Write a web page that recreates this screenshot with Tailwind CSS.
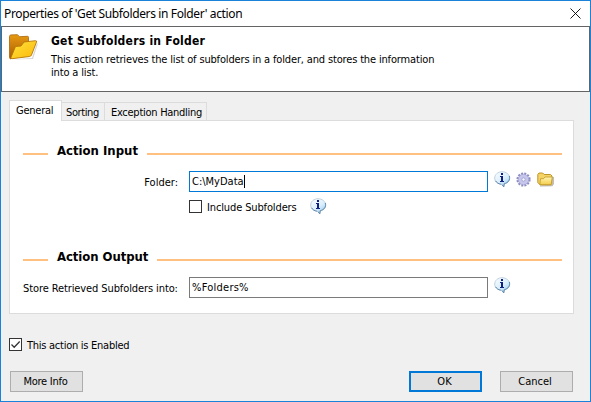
<!DOCTYPE html>
<html lang="en">
<head>
<meta charset="utf-8">
<title>Properties of 'Get Subfolders in Folder' action</title>
<script src="https://cdn.jsdelivr.net/npm/@tailwindcss/browser@4"></script>
</head>
<body class="bg-[#f0f0f0]">
<svg class="absolute w-0 h-0" aria-hidden="true">
  <defs>
    <linearGradient id="bubble" x1="0" y1="0" x2=".7" y2="1"><stop offset="0" stop-color="#fafdff"/><stop offset=".6" stop-color="#dceffc"/><stop offset="1" stop-color="#9ccdf0"/></linearGradient>
    <linearGradient id="front" x1="0" y1="0" x2="1" y2="1"><stop offset="0" stop-color="#ffe23c"/><stop offset="1" stop-color="#fbb90c"/></linearGradient>
    <linearGradient id="back" x1="0" y1="0" x2="0" y2="1"><stop offset="0" stop-color="#e79a10"/><stop offset="1" stop-color="#a85a05"/></linearGradient>
    <linearGradient id="small" x1="0" y1="0" x2="0" y2="1"><stop offset="0" stop-color="#fff6b0"/><stop offset="1" stop-color="#f3cc4c"/></linearGradient>
    <symbol id="info" viewBox="0 0 17 17">
      <path d="M8 .7C3.9.7.7 3.500.7 7s2.400 5.500 6.200 6.200c1.300.3 1.800 1.400 2.700 2.700l.4-3.100c3.500-.8 5.700-2.900 5.700-5.800C15.700 3.500 12.200.7 8 .7z" fill="url(#bubble)" stroke="#b4c6d6" stroke-width=".8"/>
      <path d="M15.300 5c1.100 3.800-1 6.800-5 7.700l-.5 3.100-1.800-2.200M1.600 9.800c1 1.900 2.900 3 5.200 3.400" fill="none" stroke="#5d87ad" stroke-width="1"/>
      <path d="M7 2h2v2H7zM6 5h3v5h1v1H6v-1h1V6H6z" fill="#10207e"/>
    </symbol>
  </defs>
</svg>
<div class="w-[591px] h-[402px] border border-[#1a82d8] bg-[#f0f0f0] flex flex-col overflow-hidden text-black whitespace-nowrap font-['DejaVu_Sans_Condensed','DejaVu_Sans',sans-serif] [font-stretch:condensed] text-[11px] leading-[13px]">
  <header class="h-[25px] shrink-0 bg-white flex items-center justify-between pl-[3px] pr-[9px]">
    <h1 class="font-['Noto_Sans',sans-serif] text-[12px] leading-[16px] tracking-[-0.37px] [font-stretch:normal]">Properties of 'Get Subfolders in Folder' action</h1>
    <svg class="w-[11px] h-[11px]" viewBox="0 0 11 11"><path d="M.5.5l10 10M10.500.5l-10 10" stroke="#000" stroke-width=".9"/></svg>
  </header>
  <section class="h-[66px] w-[589px] shrink-0 bg-white border border-[#646464] flex pl-[7px] pt-[7px]">
    <svg class="w-[29px] h-[27px] shrink-0" viewBox="0 0 29 27">
      <path d="M2 25.500L23 24l5-15 .8 1L24 25z" fill="#bbb" opacity=".6"/>
      <path d="M.5 2.500Q.5 1 2 .9L8.500.7l2 2 8-.4q1 0 1 1V9L2 25Q.5 25 .5 23z" fill="url(#back)" stroke="#a86408" stroke-width=".8"/>
      <path d="M6.500 12.500l5.500-.5 3-4 11.500-1.300q1.500 0 1 1.300L22.500 21q-.5 1.300-2 1.500L3 24.700q-1.300 0-1-1.300z" fill="url(#front)" stroke="#b67505" stroke-width=".9"/>
    </svg>
    <div class="pl-[13px]">
      <h2 class="font-bold text-[12px] leading-[15px] tracking-[0.25px]">Get Subfolders in Folder</h2>
      <p class="pt-[4px] tracking-[-0.155px]">This action retrieves the list of subfolders in a folder, and stores the information<br>into a list.</p>
    </div>
  </section>
  <main class="pt-[8px] pl-[8px] shrink-0">
    <nav class="flex items-end h-[20px] relative -mb-px">
      <div class="w-[53px] h-[21px] -mb-px relative z-10 bg-white border border-b-0 border-[#dcdcdc] pl-[6px] pt-[3px] tracking-[-0.25px]">General</div>
      <div class="w-[43px] h-[18px] border-t border-r border-[#dcdcdc] pl-[4px] pt-[3px] tracking-[-0.4px]">Sorting</div>
      <div class="w-[102px] h-[18px] border-t border-r border-[#dcdcdc] pl-[6px] pt-[3px] tracking-[-0.27px]">Exception Handling</div>
    </nav>
    <div class="w-[565px] h-[194px] mt-px bg-white border border-[#dcdcdc] pt-[22px] pl-[13px] pr-[11px]">
      <div class="flex items-center h-[16px]">
        <i class="w-[25px] h-[2px] mt-[5px] bg-[#ffc080]"></i>
        <h3 class="font-bold text-[13px] leading-[15px] w-[99px] pl-[9px] pb-[2px]">Action Input</h3>
        <i class="flex-1 h-[2px] mt-[5px] bg-[#ffc080]"></i>
      </div>
      <div class="flex mt-[12px] h-[21px]">
        <label class="w-[155px] text-right pt-[5px]">Folder:</label>
        <div class="ml-[11px] w-[299px] h-[21px] bg-white border border-[#0078d7] pl-[2px] pt-[3px] flex"><span>C:\MyData</span><i class="w-px h-[13px] bg-black"></i></div>
        <svg class="w-[17px] h-[17px] ml-[6px]"><use href="#info"/></svg>
        <svg class="w-[15px] h-[15px] ml-[5px] mt-px" viewBox="0 0 15 15">
          <circle cx="7.500" cy="7.500" r="5.800" fill="none" stroke="#8c8cc0" stroke-width="2.600" stroke-dasharray="1.900 1.140"/>
          <circle cx="7.500" cy="7.500" r="5.300" fill="#c6c6ec" stroke="#a2a2d2" stroke-width=".8"/>
          <circle cx="7.500" cy="7.500" r="1.700" fill="#f5f5fc" stroke="#9c9ccc" stroke-width=".8"/>
        </svg>
        <svg class="w-[17px] h-[15px] ml-[6px] mt-px" viewBox="0 0 17 15">
          <path d="M3 14l12-.3 1.300-2V5" fill="none" stroke="#999" stroke-width="1.200" opacity=".7"/>
          <path d="M.8 2.500L2 1h3.700l1.500 1.500h6.300L15 4v7.500l-1 1.300H3L.8 10.500z" fill="#f5d465" stroke="#b88a18" stroke-width=".9"/>
          <path d="M3.500 6.700h3L8 5h7.300l-1.200 7.700H2.800z" fill="url(#small)" stroke="#c0962a" stroke-width=".8"/>
        </svg>
      </div>
      <div class="flex mt-[7px] h-[16px] pl-[166px]">
        <span class="w-[13px] h-[13px] mt-px bg-white border border-[#333]"></span>
        <label class="w-[103px] pl-[5px] pt-[2px] tracking-[-0.13px]">Include Subfolders</label>
        <svg class="w-[17px] h-[17px] ml-[5px] -mt-px"><use href="#info"/></svg>
      </div>
      <div class="flex items-center h-[16px] mt-[34px]">
        <i class="w-[25px] h-[2px] mt-[5px] bg-[#ffc080]"></i>
        <h3 class="font-bold text-[13px] leading-[15px] w-[109px] pl-[9px] pb-[2px] tracking-[-0.07px]">Action Output</h3>
        <i class="flex-1 h-[2px] mt-[5px] bg-[#ffc080]"></i>
      </div>
      <div class="flex mt-[12px] h-[21px]">
        <label class="w-[155px] pt-[5px] tracking-[-0.1px]">Store Retrieved Subfolders into:</label>
        <div class="ml-[11px] w-[299px] h-[21px] bg-white border border-[#7a7a7a] pl-[2px] pt-[3px] tracking-[0.25px]">%Folders%</div>
        <svg class="w-[17px] h-[17px] ml-[6px]"><use href="#info"/></svg>
      </div>
    </div>
  </main>
  <footer class="shrink-0 pl-[8px] pt-[24px]">
    <div class="flex h-[13px]">
      <svg class="w-[13px] h-[13px]" viewBox="0 0 13 13"><rect x=".5" y=".5" width="12" height="12" fill="#fff" stroke="#333"/><path d="M2.500 6.500l2.700 2.700L10.700 3.500" fill="none" stroke="#333" stroke-width="1.300"/></svg>
      <label class="pl-[5px] pt-px tracking-[-0.26px]">This action is Enabled</label>
    </div>
    <div class="flex mt-[20px] pl-px">
      <button class="w-[73px] h-[21px] bg-[#e1e1e1] border border-[#adadad] leading-[19px] tracking-[-0.25px] pr-[2px]">More Info</button>
      <button class="w-[73px] h-[21px] ml-[326px] bg-[#e1e1e1] border-2 border-[#0078d7] leading-[17px] pr-[2px]">OK</button>
      <button class="w-[73px] h-[21px] ml-[18px] bg-[#e1e1e1] border border-[#adadad] leading-[19px] pr-[3px]">Cancel</button>
    </div>
  </footer>
</div>
</body>
</html>
